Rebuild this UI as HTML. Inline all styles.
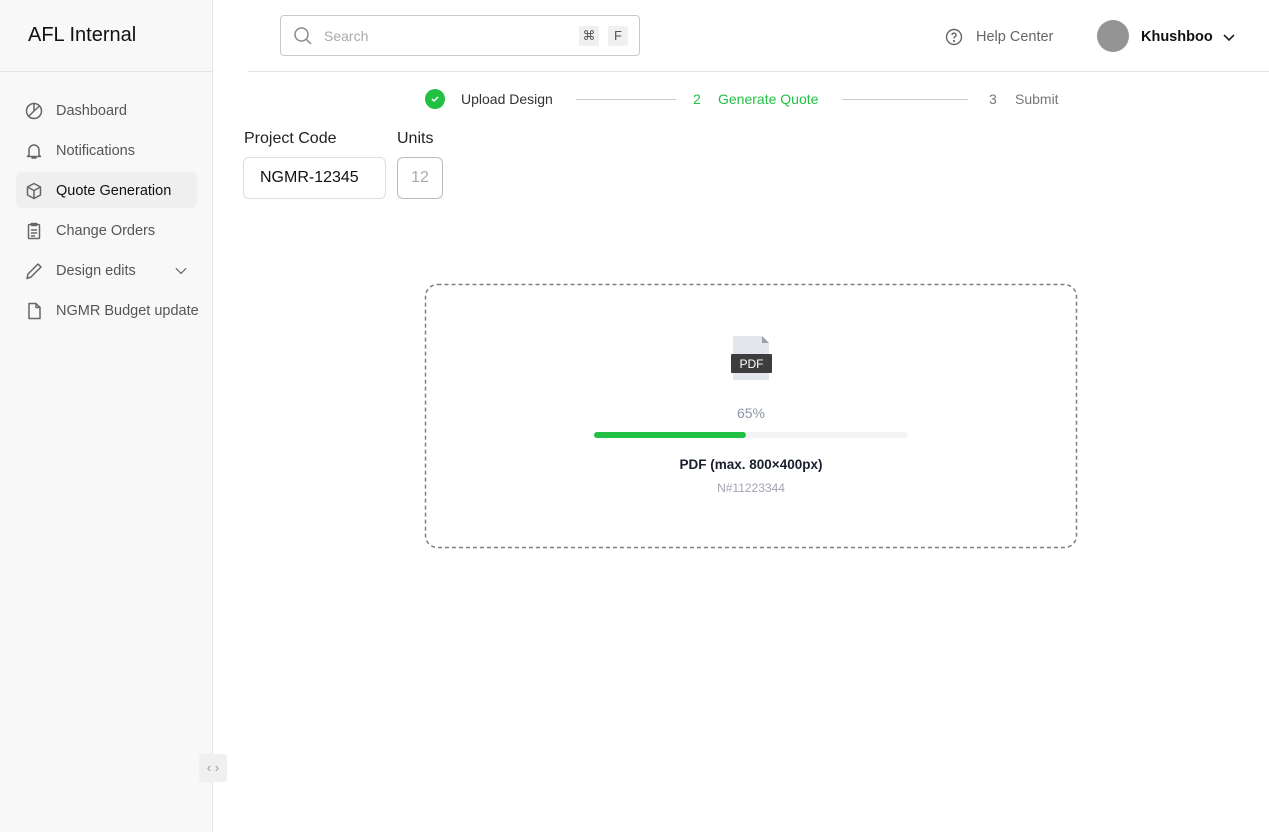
<!DOCTYPE html>
<html><head><meta charset="utf-8"><style>
*{box-sizing:border-box;margin:0;padding:0}
body{width:1269px;height:832px;overflow:hidden;background:#fff;font-family:"Liberation Sans",sans-serif;position:relative;color:#111}
.sb{position:absolute;left:0;top:0;width:213px;height:832px;background:#f8f8f8;border-right:1px solid #e6e6e6}
.logo{position:absolute;left:28px;top:24px;font-size:20px;color:#111}
.sbline{position:absolute;left:0;top:71px;width:213px;height:1px;background:#e3e3e3}
.nav{position:absolute;left:16px;width:181px;height:36px;border-radius:6px;display:flex;align-items:center;padding-left:8px;font-size:14.5px;color:#555;white-space:nowrap;padding-top:2px}
.nav svg{width:20px;height:20px;margin-right:12px;fill:none;stroke:#666;stroke-width:1.5;stroke-linecap:round;stroke-linejoin:round;flex:none}
.nav.act{background:#efefef;color:#111}
.search{position:absolute;left:280px;top:15px;width:360px;height:41px;border:1px solid #c9c9c9;border-radius:4px}
.search .ph{position:absolute;left:43px;top:12px;font-size:14px;color:#aaa}
.kbd{position:absolute;top:10px;width:20px;height:20px;background:#f0f0f0;border-radius:2px;font-size:13px;color:#555;text-align:center;line-height:20px}
.topline{position:absolute;left:248px;top:71px;width:1021px;height:1px;background:#e3e3e3}
.help{position:absolute;left:945px;top:28px;font-size:14.5px;color:#666;display:flex;align-items:center}
.av{position:absolute;left:1097px;top:20px;width:32px;height:32px;border-radius:50%;background:#949494}
.user{position:absolute;left:1141px;top:29px;font-size:14.5px;color:#111;font-weight:bold}
.step{position:absolute;top:91px;font-size:14px}
.sline{position:absolute;top:99px;height:1px;background:#ccc}
.lbl{position:absolute;top:130px;font-size:16px;color:#222}
.inp{position:absolute;top:157px;height:42px;border:1px solid #ddd;border-radius:6px;font-size:16px;display:flex;align-items:center}
</style></head><body>
<div class="sb">
<div class="logo">AFL Internal</div>
<div class="sbline"></div>
<div class="nav" style="top:92px"><svg viewBox="0 0 20 20"><circle cx="10" cy="10" r="7.5"/><path d="M10 2.5V10L15.5 5M10 10l-5 5"/></svg>Dashboard</div>
<div class="nav" style="top:132px"><svg viewBox="0 0 20 20"><path d="M5 14V9a5 5 0 0 1 10 0v5l1.5 1.5h-13zM8 17h4"/></svg>Notifications</div>
<div class="nav act" style="top:172px"><svg viewBox="0 0 20 20"><path d="M10 2.5l6.5 3.5v8L10 17.5 3.5 14V6zM3.5 6L10 9.5 16.5 6M10 9.5v8"/></svg>Quote Generation</div>
<div class="nav" style="top:212px"><svg viewBox="0 0 20 20"><rect x="4.5" y="3.5" width="11" height="14" rx="1"/><path d="M7.5 2.5h5v2h-5zM7.5 9h5M7.5 12h5M7.5 15h3"/></svg>Change Orders</div>
<div class="nav" style="top:252px"><svg viewBox="0 0 20 20"><path d="M3 17.5l1-4.5L14 3l3 3L7 16z"/></svg>Design edits<svg viewBox="0 0 20 20" style="position:absolute;left:157px;width:16px;height:16px;margin:0"><path d="M4 7l6 6 6-6"/></svg></div>
<div class="nav" style="top:292px;width:200px"><svg viewBox="0 0 20 20"><path d="M5 2.5h7l4 4v11H5zM12 2.5v4h4"/></svg>NGMR Budget update</div>
</div>
<div style="position:absolute;left:199px;top:754px;width:28px;height:28px;background:#f0f0f0;border-radius:3px;color:#999;font-size:13px;text-align:center;line-height:28px">‹ ›</div>
<div class="search"><svg style="position:absolute;left:12px;top:10px" width="20" height="20" viewBox="0 0 20 20" fill="none" stroke="#888" stroke-width="1.5"><circle cx="8.5" cy="8.5" r="6.5"/><path d="M13.5 13.5L18 18"/></svg><span class="ph">Search</span><span class="kbd" style="left:298px">⌘</span><span class="kbd" style="left:327px">F</span></div>
<div class="help"><svg width="18" height="18" viewBox="0 0 18 18" fill="none" stroke="#666" stroke-width="1.4" style="margin-right:13px"><circle cx="9" cy="9" r="7.5"/><path d="M7 7a2 2 0 1 1 2.5 2c-.4.2-.5.5-.5 1v.5"/><circle cx="9" cy="13" r=".4" fill="#666"/></svg>Help Center</div>
<div class="av"></div>
<div class="user">Khushboo</div>
<svg style="position:absolute;left:1221px;top:29px" width="16" height="16" viewBox="0 0 16 16" fill="none" stroke="#222" stroke-width="1.6"><path d="M3 6l5 5 5-5"/></svg>
<div class="topline"></div>
<div style="position:absolute;left:425px;top:89px;width:20px;height:20px;border-radius:50%;background:#22c043"><svg width="20" height="20" viewBox="0 0 20 20" fill="none" stroke="#fff" stroke-width="1.5"><path d="M7 10l2 2 4-4"/></svg></div>
<div class="step" style="left:461px;color:#333">Upload Design</div>
<div class="sline" style="left:576px;width:100px"></div>
<div class="step" style="left:693px;color:#22c043">2</div>
<div class="step" style="left:718px;color:#22c043">Generate Quote</div>
<div class="sline" style="left:842px;width:126px"></div>
<div class="step" style="left:989px;color:#777">3</div>
<div class="step" style="left:1015px;color:#777">Submit</div>
<div class="lbl" style="left:244px">Project Code</div>
<div class="lbl" style="left:397px">Units</div>
<div class="inp" style="left:243px;width:143px;padding-left:16px;color:#111">NGMR-12345</div>
<div class="inp" style="left:397px;width:46px;justify-content:center;color:#aaa;border-color:#bbb">12</div>
<svg style="position:absolute;left:424px;top:283px" width="654" height="266"><rect x="1.5" y="1.5" width="651" height="263" rx="12" fill="none" stroke="#808080" stroke-width="1.5" stroke-dasharray="4 3"/></svg>
<svg style="position:absolute;left:730px;top:335px" width="43" height="47" viewBox="0 0 43 47"><path d="M3 1h29l7 7v37H3z" fill="#e3e6ec"/><path d="M32 1v7h7z" fill="#9aa1ad"/><rect x="1" y="19" width="41" height="19" rx="1" fill="#3d3d3d"/><text x="21.5" y="33" font-family="Liberation Sans" font-size="12" fill="#fff" text-anchor="middle">PDF</text></svg>
<div style="position:absolute;left:0;width:1502px;top:405px;text-align:center;font-size:14px;color:#8f96a3">65%</div>
<div style="position:absolute;left:594px;top:432px;width:314px;height:6px;border-radius:3px;background:#f3f3f3"><div style="width:152px;height:6px;border-radius:3px;background:#22c043"></div></div>
<div style="position:absolute;left:0;width:1502px;top:457px;text-align:center;font-size:13.5px;color:#1a1f2e;font-weight:bold">PDF (max. 800×400px)</div>
<div style="position:absolute;left:0;width:1502px;top:481px;text-align:center;font-size:12px;color:#a0a5b0">N#11223344</div>
</body></html>
